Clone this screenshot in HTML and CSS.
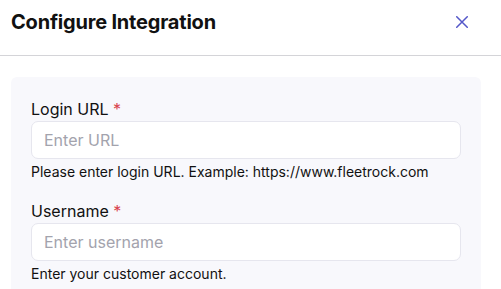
FILE: index.html
```html
<!DOCTYPE html>
<html lang="en">
<head>
<meta charset="utf-8">
<title>Configure Integration</title>
<link rel="stylesheet" href="styles.css">
</head>
<body>
<div class="modal">
  <header class="modal-header">
    <h1 class="modal-title">Configure Integration</h1>
    <button class="close-btn" aria-label="Close">
      <svg width="12" height="12" viewBox="0 0 12 12"><path d="M0.75 0.75L11.25 11.25M11.25 0.75L0.75 11.25" stroke="currentColor" stroke-width="1.5" stroke-linecap="round" fill="none"/></svg>
    </button>
  </header>
  <div class="panel">
    <div class="field">
      <label class="field-label">Login URL <span class="req">*</span></label>
      <input class="field-input" type="text" placeholder="Enter URL">
      <p class="field-help">Please enter login URL. Example: https://www.fleetrock.com</p>
    </div>
    <div class="field">
      <label class="field-label">Username <span class="req">*</span></label>
      <input class="field-input" type="text" placeholder="Enter username">
      <p class="field-help">Enter your customer account.</p>
    </div>
  </div>
</div>
</body>
</html>
```
FILE: styles.css
```css
html, body {
  margin: 0;
  padding: 0;
  background: #ffffff;
}
body {
  font-family: Inter, "Noto Sans", sans-serif;
  color: #111111;
  overflow: hidden;
}
.modal-header {
  display: flex;
  align-items: center;
  justify-content: space-between;
  height: 56px;
  padding: 0 33px 12px 11px;
  box-sizing: border-box;
  border-bottom: 1px solid #d4d4d8;
}
.modal-title {
  margin: 0;
  font-size: 20px;
  font-weight: 700;
  line-height: 24px;
  letter-spacing: -0.2px;
  color: #111111;
}
.close-btn {
  border: 0;
  background: transparent;
  padding: 0;
  width: 12px;
  height: 12px;
  display: flex;
  color: #5457c9;
  cursor: pointer;
}
.panel {
  margin: 21px 20px 0 11px;
  padding: 20px 20px 20px 20px;
  background: #f8f8fc;
  border-radius: 6px;
  display: flex;
  flex-direction: column;
  gap: 17px;
}
.field {
  display: flex;
  flex-direction: column;
}
.field-label {
  font-size: 16px;
  line-height: 24px;
  color: #111111;
}
.req {
  color: #d9434d;
}
.field-input {
  height: 38px;
  box-sizing: border-box;
  border: 1px solid #e6e6ee;
  border-radius: 7px;
  background: #ffffff;
  padding: 0 12px;
  font-family: Inter, "Noto Sans", sans-serif;
  font-size: 16px;
  color: #111111;
  outline: none;
}
.field-input::placeholder {
  color: #a3a3ad;
}
.field-help {
  margin: 3px 0 0;
  font-size: 14px;
  line-height: 20px;
  color: #111111;
}
```
